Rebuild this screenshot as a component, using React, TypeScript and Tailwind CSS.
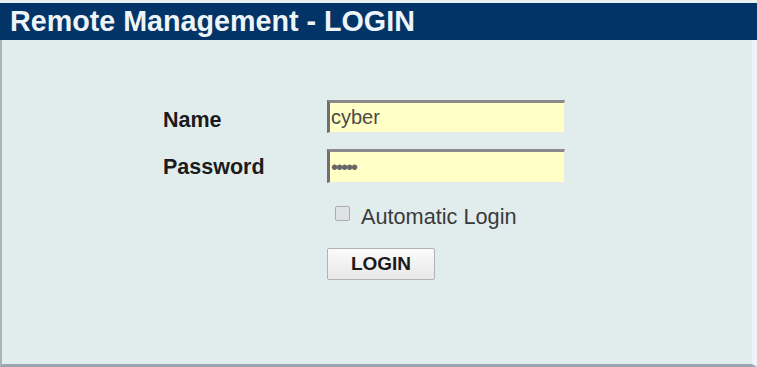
const inputCls =
  "h-[33px] w-[238px] bg-[#ffffc6] border-t-[3px] border-l-[3px] border-b border-r border-t-[#8a8a8a] border-l-[#6f6f6f] border-b-[#e8e8e8] border-r-[#e8e8e8] pl-[1px] text-[20px] text-[#4a4a4a] outline-none";

export default function App() {
  return (
    <div className="h-[367px] w-[757px] bg-[#e9f1f3] pt-[3px] font-['Liberation_Sans',Arial,sans-serif]">
      {/* Header */}
      <div className="flex h-[37px] items-center bg-[#023468] pl-[10px]">
        <h1 className="text-[28.7px] font-bold leading-none text-[#eef4f8]">Remote Management - LOGIN</h1>
      </div>

      <div className="flex h-[327px] flex-col border-l-2 border-b-[3px] border-r-[5px] border-l-[#a9b4bb] border-b-[#9aa6ae] border-r-[#edf3f6] bg-[#e1eded]">
        {/* Form */}
        <div className="flex flex-col pl-[161px] pt-[60px]">
          <div className="flex h-[33px] items-center">
            <label className="w-[164px] pt-[9px] text-[21.5px] font-bold leading-none text-[#1b1b1b]">Name</label>
            <input className={inputCls} defaultValue="cyber" />
          </div>
          <div className="mt-[16px] flex h-[34px] items-center">
            <label className="w-[164px] pt-[3px] text-[21.5px] font-bold leading-none text-[#1b1b1b]">Password</label>
            <input type="password" className={inputCls + " h-[34px] tracking-[-2px] text-[11px] text-[#666]"} defaultValue="cyber" />
          </div>
          <div className="mt-[19px] flex h-[24px] items-center pl-[172px]">
            <span className="mb-[2px] h-[15px] w-[15px] rounded-[2px] border border-[#a9adb0] bg-[#dfe3e4]" />
            <span className="ml-[11px] pt-[6px] text-[21.7px] leading-none text-[#3a3a3a]">Automatic Login</span>
          </div>
          <div className="mt-[22px] pl-[164px]">
            <button className="flex h-[32px] w-[108px] items-center justify-center rounded-[2px] border border-[#b3b3b3] bg-gradient-to-b from-[#fbfbfb] to-[#e8e8e8] text-[19px] font-bold text-[#1a1a1a]">
              LOGIN
            </button>
          </div>
        </div>
      </div>
    </div>
  );
}
